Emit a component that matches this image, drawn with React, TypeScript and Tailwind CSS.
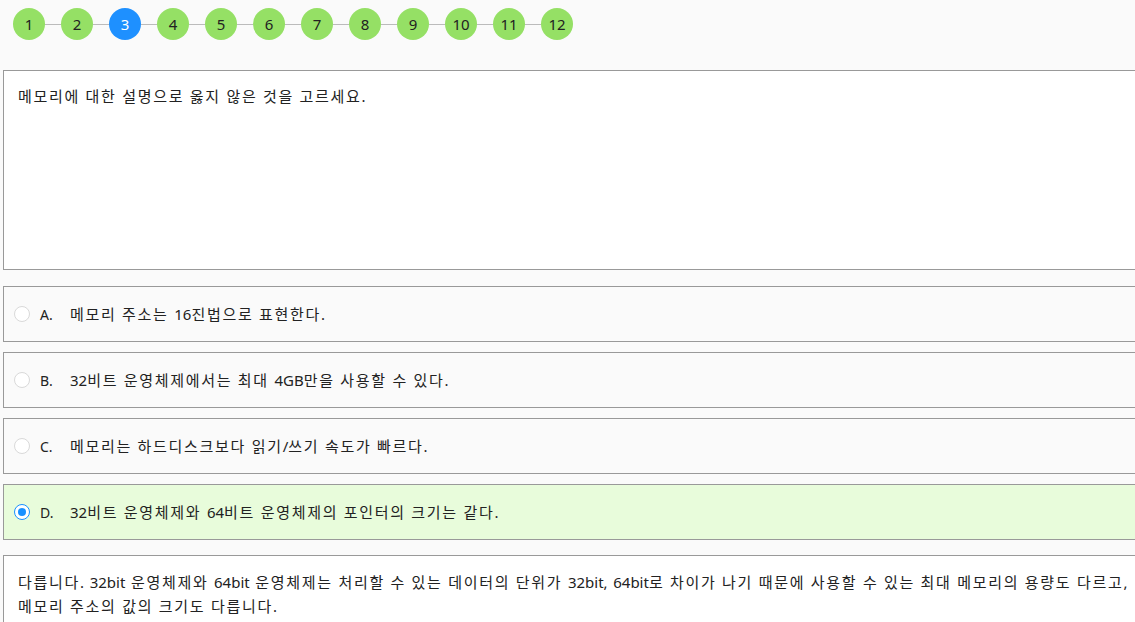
import React from "react";

const font = { fontFamily: '"Noto Sans", "Noto Sans CJK KR", sans-serif' };

function K({ children }: { children: string }) {
  const parts = children.split(/([A-Za-z0-9.,\/]+)/);
  return (
    <>
      {parts.map((p, i) =>
        i % 2 === 1 ? (
          <span key={i}>{p}</span>
        ) : (
          <span key={i} className="tracking-[1.7px]">
            {p}
          </span>
        )
      )}
    </>
  );
}

const options = [
  { label: "A.", text: "메모리 주소는 16진법으로 표현한다." },
  { label: "B.", text: "32비트 운영체제에서는 최대 4GB만을 사용할 수 있다." },
  { label: "C.", text: "메모리는 하드디스크보다 읽기/쓰기 속도가 빠르다." },
  { label: "D.", text: "32비트 운영체제와 64비트 운영체제의 포인터의 크기는 같다." },
];

export default function App() {
  const selected = 3;
  return (
    <div
      className="min-h-screen w-full overflow-hidden bg-[#fafafa] text-[15px] text-[#222]"
      style={font}
    >
      <div className="flex items-center pl-[13px] pt-[8px]">
        {Array.from({ length: 12 }, (_, i) => (
          <React.Fragment key={i}>
            {i > 0 && <div className="h-px w-[16px] bg-[#bbbbbb]" />}
            <div
              className={
                "flex h-[32px] w-[32px] items-center justify-center rounded-full text-[15px] " +
                (i === 2 ? "bg-[#1e90ff] text-white" : "bg-[#95e065] text-[#222]")
              }
            >
              {i + 1}
            </div>
          </React.Fragment>
        ))}
      </div>

      <div className="mt-[30px] w-[1150px] pl-[3px]">
        <div className="h-[200px] border border-[#999999] bg-white px-[14px] pt-[13px] leading-[24px]">
          <K>메모리에 대한 설명으로 옳지 않은 것을 고르세요.</K>
        </div>

        <div className="mt-[16px] flex flex-col gap-[10px]">
          {options.map((o, i) => (
            <div
              key={i}
              className={
                "flex h-[56px] items-center border border-[#999999] pl-[10px] " +
                (i === selected ? "bg-[#e8fcdb]" : "bg-[#fafafa]")
              }
            >
              {i === selected ? (
                <span className="flex h-[16px] w-[16px] items-center justify-center rounded-full border border-[#1890ff] bg-white">
                  <span className="h-[8px] w-[8px] rounded-full bg-[#1890ff]" />
                </span>
              ) : (
                <span className="h-[16px] w-[16px] rounded-full border border-[#d9d9d9] bg-white" />
              )}
              <span className="ml-[10px] w-[30px] text-[14px]">{o.label}</span>
              <span>
                <K>{o.text}</K>
              </span>
            </div>
          ))}
        </div>

        <div className="mt-[15px] h-[80px] whitespace-nowrap border border-[#999999] bg-white px-[14px] pt-[14px] leading-[24px]">
          <K>다릅니다. 32bit 운영체제와 64bit 운영체제는 처리할 수 있는 데이터의 단위가 32bit, 64bit로 차이가 나기 때문에 사용할 수 있는 최대 메모리의 용량도 다르고,</K>
          <br />
          <K>메모리 주소의 값의 크기도 다릅니다.</K>
        </div>
      </div>
    </div>
  );
}
